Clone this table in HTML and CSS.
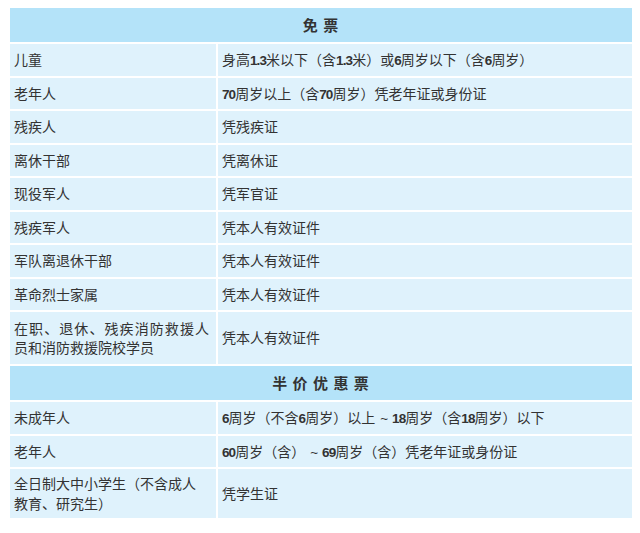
FILE: index.html
```html
<!DOCTYPE html>
<html lang="zh-CN">
<head>
<meta charset="utf-8">
<link rel="stylesheet" href="styles.css">
</head>
<body>
<div class="table">
  <div class="head">免 票</div>
  <div class="cell left">儿童</div>
  <div class="cell">身高<span class="num">1.3</span>米以下（含<span class="num">1.3</span>米）或<span class="num">6</span>周岁以下（含<span class="num">6</span>周岁）</div>
  <div class="cell left">老年人</div>
  <div class="cell"><span class="num">70</span>周岁以上（含<span class="num">70</span>周岁）凭老年证或身份证</div>
  <div class="cell left">残疾人</div>
  <div class="cell">凭残疾证</div>
  <div class="cell left">离休干部</div>
  <div class="cell">凭离休证</div>
  <div class="cell left">现役军人</div>
  <div class="cell">凭军官证</div>
  <div class="cell left">残疾军人</div>
  <div class="cell">凭本人有效证件</div>
  <div class="cell left">军队离退休干部</div>
  <div class="cell">凭本人有效证件</div>
  <div class="cell left">革命烈士家属</div>
  <div class="cell">凭本人有效证件</div>
  <div class="cell left tall"><span class="justify">在职、退休、残疾消防救援人员和消防救援院校学员</span></div>
  <div class="cell tall">凭本人有效证件</div>
  <div class="head">半 价 优 惠 票</div>
  <div class="cell left">未成年人</div>
  <div class="cell"><span class="num">6</span>周岁（不含<span class="num">6</span>周岁）以上<span class="num tilde">~</span><span class="num">18</span>周岁（含<span class="num">18</span>周岁）以下</div>
  <div class="cell left">老年人</div>
  <div class="cell"><span class="num">60</span>周岁（含）<span class="num tilde">~</span><span class="num">69</span>周岁（含）凭老年证或身份证</div>
  <div class="cell left tall2">全日制大中小学生（不含成人教育、研究生）</div>
  <div class="cell tall2">凭学生证</div>
</div>
</body>
</html>
```
FILE: styles.css
```css
html, body {
  margin: 0;
  padding: 0;
  background: #ffffff;
}
body {
  font-family: "Noto Sans CJK SC", "Noto Sans", sans-serif;
  font-size: 14px;
  color: #333333;
}
.table {
  display: grid;
  grid-template-columns: 206px 414px;
  gap: 2px;
  width: 622px;
  margin: 8px 0 0 10px;
}
.head {
  grid-column: 1 / 3;
  background: #b4e3f9;
  text-align: center;
  font-weight: bold;
  font-size: 15px;
  letter-spacing: 1px;
  line-height: 20px;
  padding: 7px 0;
}
.cell {
  background: #dff2fc;
  line-height: 19.5px;
  padding: 6px 6px 6px 4px;
  display: flex;
  align-items: center;
}
.num {
  font-family: "Liberation Sans", sans-serif;
  font-weight: bold;
  font-size: 13.5px;
  line-height: 1;
  letter-spacing: -0.9px;
}
.tilde {
  font-weight: normal;
  letter-spacing: 0;
  margin: 0 4px 0 5px;
}
.cell:not(.left) {
  display: block;
}
.left {
  padding-right: 7px;
}
.tall {
  min-height: 52px;
  box-sizing: border-box;
}
.tall2 {
  min-height: 49px;
  box-sizing: border-box;
  padding-top: 5px;
  padding-bottom: 5px;
}
.cell.tall:not(.left),
.cell.tall2:not(.left) {
  display: flex;
  align-items: center;
}
.justify {
  display: block;
  width: 100%;
  text-align: justify;
}
```
